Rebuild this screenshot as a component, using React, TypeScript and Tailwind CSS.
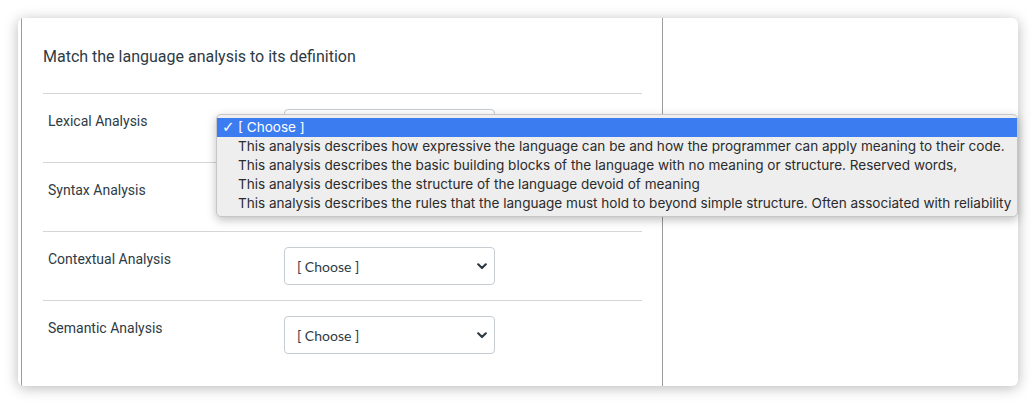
import React from 'react';

const rows = ['Lexical Analysis', 'Syntax Analysis', 'Contextual Analysis', 'Semantic Analysis'];

const options = [
  'This analysis describes how expressive the language can be and how the programmer can apply meaning to their code.',
  'This analysis describes the basic building blocks of the language with no meaning or structure. Reserved words,',
  'This analysis describes the structure of the language devoid of meaning',
  'This analysis describes the rules that the language must hold to beyond simple structure. Often associated with reliability',
];

const ChooseSelect: React.FC = () => (
  <div className="relative w-[211px] h-[38px]">
    <select
      defaultValue=""
      className="appearance-none w-full h-full rounded-[4px] border border-[#c7cdd1] bg-white pl-[12px] pr-8 font-['Lato',sans-serif] text-[14px] text-[#2d3b45] outline-none"
    >
      <option value="">[ Choose ]</option>
      {options.map((o) => (
        <option key={o}>{o}</option>
      ))}
    </select>
    <svg
      className="pointer-events-none absolute right-[8px] top-[16px]"
      width="10"
      height="7"
      viewBox="0 0 10 7"
    >
      <path d="M1.2 1.3 L5 5 L8.8 1.3" fill="none" stroke="#2d3b45" strokeWidth="2.2" strokeLinecap="round" strokeLinejoin="round" />
    </svg>
  </div>
);

export default function App() {
  return (
    <div className="relative w-[1036px] h-[404px] bg-white p-[18px] font-['Roboto','Noto_Sans',sans-serif] overflow-hidden">
      <div className="flex h-[368px] w-[1000px] rounded-[6px] bg-white shadow-[0_2px_14px_rgba(0,0,0,0.28)] overflow-hidden pl-[3px]">
        <div className="w-[642px] border-l border-r border-[#9b9b9b] pl-[21px] pr-[20px] pt-[27px]">
          <h2 className="text-[16px] leading-[24px] text-[#2d3b45] mb-[24px]">
            Match the language analysis to its definition
          </h2>
          {rows.map((label) => (
            <div key={label} className="flex items-start border-t border-[#d3d6d9] py-[15px]">
              <div className="w-[241px] pl-[5px] pt-[2px] text-[14px] leading-[20px] text-[#2d3b45]">{label}</div>
              <ChooseSelect />
            </div>
          ))}
        </div>
        <div className="flex-1" />
      </div>

      {/* open native dropdown for the first select */}
      <div className="absolute left-[216px] top-[114px] w-[802px] rounded-[5px] border border-[#c6c6c6] bg-[#eeeeee] py-[3px] shadow-[0_3px_10px_rgba(0,0,0,0.25)] font-['Inter','Liberation_Sans',sans-serif] text-[13.55px] leading-[19px] text-[#2b2b2b]">
        <div className="flex h-[19px] items-center bg-[#3b7cf1] text-white">
          <span className="w-[21px] pl-[5px] text-[15px] font-['DejaVu_Sans',sans-serif]">✓</span>
          <span>[ Choose ]</span>
        </div>
        {options.map((o) => (
          <div key={o} className="flex h-[19px] items-center whitespace-nowrap">
            <span className="w-[21px]" />
            <span>{o}</span>
          </div>
        ))}
      </div>
    </div>
  );
}
